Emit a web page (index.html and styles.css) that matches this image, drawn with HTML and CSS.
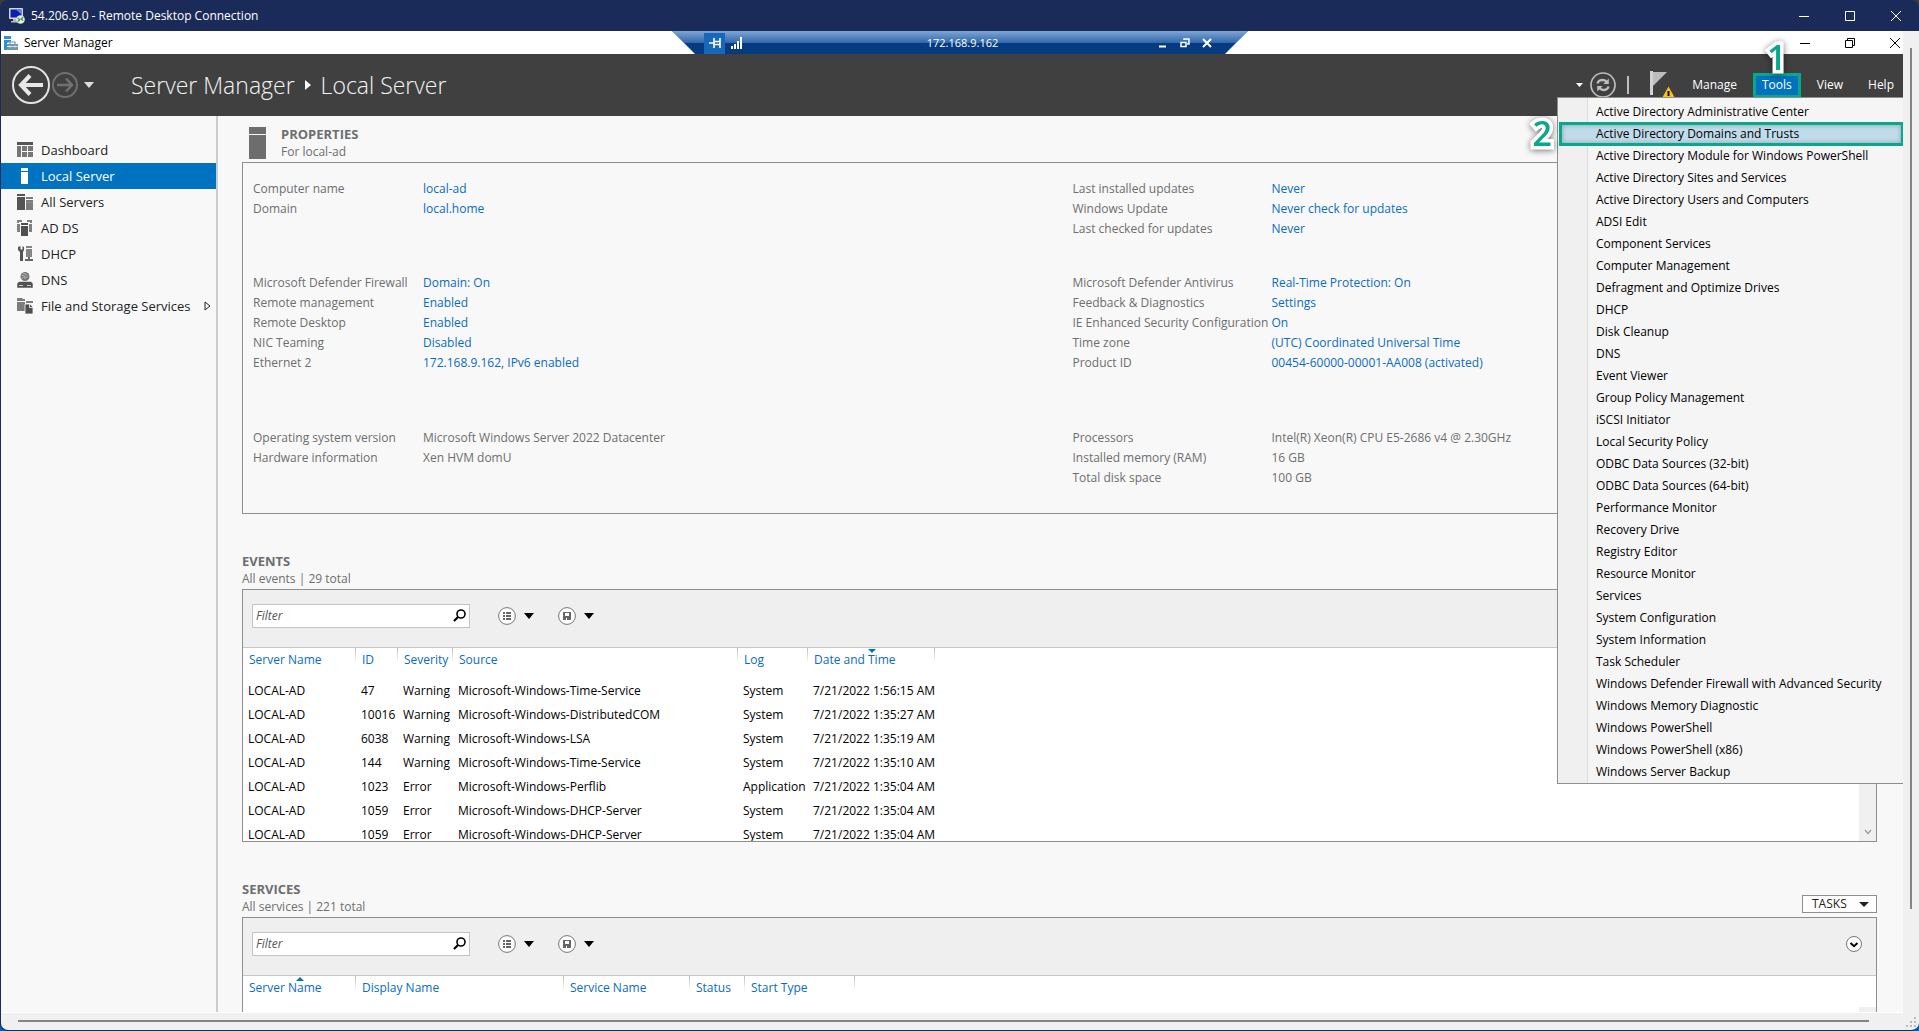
FILE: index.html
```html
<!DOCTYPE html>
<html lang="en">
<head>
<meta charset="utf-8">
<title>54.206.9.0 - Remote Desktop Connection</title>
<link rel="stylesheet" href="styles.css">
</head>
<body>
<div class="window">
  <header class="titlebar">
    <svg class="titlebar-icon" width="16" height="16" viewBox="0 0 16 16"><rect x="0" y="0" width="14" height="11" rx="1" fill="#d9d9d2"/><rect x="1.500" y="1.500" width="11" height="8" fill="#0a1fb8"/><path d="M7 1.500h5.500v5z" fill="#5e86ee"/><path d="M4 11h5v2h2v1.500H2V13h2z" fill="#b9b9b0"/><circle cx="11.500" cy="11.500" r="4.300" fill="#e8ebe4"/><path d="M8.700 10l2 1.800-2 1.800M14.200 9.200l-2 1.700 2 1.700" stroke="#2a9a2a" stroke-width="1.200" fill="none"/></svg>
    <span class="titlebar-text">54.206.9.0 - Remote Desktop Connection</span>
    <div class="window-buttons">
      <button type="button" aria-label="Minimize"><svg width="10" height="10"><path d="M0 5.500h10" stroke="#fff"/></svg></button>
      <button type="button" aria-label="Maximize"><svg width="10" height="10"><path d="M.5.500h9v9h-9z" stroke="#fff" fill="none"/></svg></button>
      <button type="button" aria-label="Close"><svg width="10" height="10"><path d="M0 0l10 10M10 0L0 10" stroke="#fff"/></svg></button>
    </div>
  </header>

  <div class="client">
    <div class="session">
      <div class="app-title">
        <svg width="14" height="14" viewBox="0 0 14 14"><path d="M0 0h7v3H0zM0 4h7v1.500L3 7v7H0z" fill="#2d8fd5"/><path d="M3 8h11v6H3z" fill="#6f97ad"/><path d="M6 8V6h5v2" stroke="#6f97ad" stroke-width="1.200" fill="none"/><path d="M3 10.500h11M6 9.500v2M11 9.500v2" stroke="#e6f0f5" stroke-width=".8"/></svg>
        <span class="app-title-text">Server Manager</span>
        <div class="app-buttons">
          <button type="button" aria-label="Minimize"><svg width="10" height="10"><path d="M0 5.500h10" stroke="#000"/></svg></button>
          <button type="button" aria-label="Restore"><svg width="10" height="10"><path d="M.5 2.500h7v7h-7zM2.500 2.500v-2h7v7h-2" stroke="#000" fill="none"/></svg></button>
          <button type="button" aria-label="Close"><svg width="10" height="10"><path d="M0 0l10 10M10 0L0 10" stroke="#000"/></svg></button>
        </div>
      </div>

      <header class="banner">
        <button type="button" class="round" aria-label="Back"><svg width="38" height="38" viewBox="0 0 38 38"><circle cx="19" cy="19" r="18" fill="none" stroke="#e4e4e4" stroke-width="2"/><path d="M31 19H10M18 9.500L9 19l9 9.500" fill="none" stroke="#e8e8e8" stroke-width="4"/></svg></button>
        <button type="button" class="round" aria-label="Forward"><svg width="26" height="26" viewBox="0 0 26 26"><circle cx="13" cy="13" r="12" fill="none" stroke="#707070" stroke-width="2"/><path d="M5 13h14M14 6.500l6 6.500-6 6.500" fill="none" stroke="#707070" stroke-width="2.500"/></svg></button>
        <button type="button" class="history" aria-label="History"><svg width="10" height="6"><path d="M0 0h10L5 6z" fill="#ddd"/></svg></button>
        <h1 class="crumbs"><span>Server Manager</span><svg width="6" height="10"><path d="M0 0l6 5-6 5z" fill="#fff"/></svg><span>Local Server</span></h1>
        <nav class="commands">
          <button type="button" class="crumb-caret" aria-label="Recent"><svg width="7" height="4"><path d="M0 0h7L3.500 4z" fill="#fff"/></svg></button>
          <button type="button" class="round" aria-label="Refresh"><svg width="26" height="26" viewBox="0 0 26 26"><circle cx="13" cy="13" r="12" fill="none" stroke="#bdbdbd" stroke-width="1.700"/><path d="M7.500 11.500c.8-3.600 6-4.800 9-1.800M18.500 14.500c-.8 3.600-6 4.800-9 1.800" fill="none" stroke="#bdbdbd" stroke-width="2.300"/><path d="M18.800 6.500v5.500h-5.500zM7.200 19.500V14h5.500z" fill="#bdbdbd"/></svg></button>
          <span class="divider"></span>
          <button type="button" class="flag" aria-label="Notifications"><svg width="26" height="28" viewBox="0 0 26 28"><path d="M0 0h3v24H0z" fill="#d2d2d2"/><path d="M3 1h14L3 15z" fill="#bdbdbd"/><path d="M18.500 15.500l6.700 12H11.800z" fill="#fdc116"/><path d="M17.500 20h2v5h-2zM17.500 26h2v2h-2z" fill="#111"/></svg></button>
          <button type="button" class="command">Manage</button>
          <button type="button" class="command command-open" aria-expanded="true">Tools<span class="callout callout-one">1</span></button>
          <button type="button" class="command">View</button>
          <button type="button" class="command">Help</button>
        </nav>
        <ul class="menu">
          <li><button type="button">Active Directory Administrative Center</button></li>
          <li class="picked"><button type="button">Active Directory Domains and Trusts</button><span class="callout callout-two">2</span></li>
          <li><button type="button">Active Directory Module for Windows PowerShell</button></li>
          <li><button type="button">Active Directory Sites and Services</button></li>
          <li><button type="button">Active Directory Users and Computers</button></li>
          <li><button type="button">ADSI Edit</button></li>
          <li><button type="button">Component Services</button></li>
          <li><button type="button">Computer Management</button></li>
          <li><button type="button">Defragment and Optimize Drives</button></li>
          <li><button type="button">DHCP</button></li>
          <li><button type="button">Disk Cleanup</button></li>
          <li><button type="button">DNS</button></li>
          <li><button type="button">Event Viewer</button></li>
          <li><button type="button">Group Policy Management</button></li>
          <li><button type="button">iSCSI Initiator</button></li>
          <li><button type="button">Local Security Policy</button></li>
          <li><button type="button">ODBC Data Sources (32-bit)</button></li>
          <li><button type="button">ODBC Data Sources (64-bit)</button></li>
          <li><button type="button">Performance Monitor</button></li>
          <li><button type="button">Recovery Drive</button></li>
          <li><button type="button">Registry Editor</button></li>
          <li><button type="button">Resource Monitor</button></li>
          <li><button type="button">Services</button></li>
          <li><button type="button">System Configuration</button></li>
          <li><button type="button">System Information</button></li>
          <li><button type="button">Task Scheduler</button></li>
          <li><button type="button">Windows Defender Firewall with Advanced Security</button></li>
          <li><button type="button">Windows Memory Diagnostic</button></li>
          <li><button type="button">Windows PowerShell</button></li>
          <li><button type="button">Windows PowerShell (x86)</button></li>
          <li><button type="button">Windows Server Backup</button></li>
        </ul>
      </header>

      <div class="workspace">
        <nav class="sidebar">
          <a href="#dashboard"><svg width="16" height="16" viewBox="0 0 16 16"><path d="M0 0h16v3H0z" fill="#555"/><path d="M0 4h4v11H0zM5 4h5v5H5zM11 4h5v5h-5zM5 10h5v5H5zM11 10h5v5h-5z" fill="#777"/></svg><span>Dashboard</span></a>
          <a href="#local" class="current"><svg width="16" height="16" viewBox="0 0 16 16"><path d="M4 0h7v3H4zM4 4h7v12H4z" fill="#fff"/></svg><span>Local Server</span></a>
          <a href="#all"><svg width="16" height="16" viewBox="0 0 16 16"><path d="M0 0h8v2H0zM0 3h8v13H0z" fill="#555"/><path d="M9 3h7v2H9zM9 6h7v10H9z" fill="#7c7c7c"/><path d="M9 8.500h7" stroke="#999" stroke-width=".6"/></svg><span>All Servers</span></a>
          <a href="#adds"><svg width="16" height="16" viewBox="0 0 16 16"><path d="M0 0h5v2H2v1H0zM10 0h5v3h-2V2h-3zM0 4h3v8H0zM12 4h3v8h-3z" fill="#808080"/><path d="M4 3h7v2H4zM4 6h7v10H4z" fill="#505050"/></svg><span>AD DS</span></a>
          <a href="#dhcp"><svg width="16" height="16" viewBox="0 0 16 16"><path d="M1 1v3l2 2v9h3V6l1-2V1L5.500 0v3.500h-2V0z" fill="#555"/><path d="M9 0h6v2H9zM9 3h6v8H9z" fill="#858585"/><path d="M11 11h2v2h3v2H8v-2h3z" fill="#666"/></svg><span>DHCP</span></a>
          <a href="#dns"><svg width="16" height="16" viewBox="0 0 16 16"><circle cx="8" cy="4.500" r="4.500" fill="#777"/><path d="M4.500 3l3 1 .5 2.500 3-3M6 1l4 2M4.500 6.500l2-1" stroke="#bbb" fill="none"/><path d="M2 9.500h12l2 2V16H0v-4.500z" fill="#505050" stroke="#f8f8f8" stroke-width=".5"/><path d="M2 13.500h4M10 13.500h4" stroke="#ccc"/></svg><span>DNS</span></a>
          <a href="#files"><svg width="16" height="16" viewBox="0 0 16 16"><path d="M0 0h5l1 1h2v2H0zM0 4h8v9H0zM9 3h7v2H9z" fill="#7c7c7c"/><path d="M8 6h5l3 3v7H8z" fill="#505050" stroke="#f8f8f8" stroke-width=".8"/><path d="M12.500 6v3.500H16" stroke="#ddd" fill="none"/></svg><span>File and Storage Services</span><svg class="expand" width="7" height="10" viewBox="0 0 7 10"><path d="M1 1l5 4-5 4z" fill="none" stroke="#222"/></svg></a>
        </nav>

        <main class="main">
          <section>
            <div class="section-head">
              <svg width="17" height="32" viewBox="0 0 17 32"><path d="M0 0h17v7H0zM0 8h17v24H0z" fill="#6d6d6d"/></svg>
              <div><h2>PROPERTIES</h2><p>For local-ad</p></div>
            </div>
            <div class="panel properties">
              <dl class="facts">
                <dt>Computer name</dt><dd><a href="#p">local-ad</a></dd>
                <dt>Domain</dt><dd><a href="#p">local.home</a></dd>
              </dl>
              <dl class="facts facts-right">
                <dt>Last installed updates</dt><dd><a href="#p">Never</a></dd>
                <dt>Windows Update</dt><dd><a href="#p">Never check for updates</a></dd>
                <dt>Last checked for updates</dt><dd><a href="#p">Never</a></dd>
              </dl>
              <dl class="facts">
                <dt>Microsoft Defender Firewall</dt><dd><a href="#p">Domain: On</a></dd>
                <dt>Remote management</dt><dd><a href="#p">Enabled</a></dd>
                <dt>Remote Desktop</dt><dd><a href="#p">Enabled</a></dd>
                <dt>NIC Teaming</dt><dd><a href="#p">Disabled</a></dd>
                <dt>Ethernet 2</dt><dd><a href="#p">172.168.9.162, IPv6 enabled</a></dd>
              </dl>
              <dl class="facts facts-right">
                <dt>Microsoft Defender Antivirus</dt><dd><a href="#p">Real-Time Protection: On</a></dd>
                <dt>Feedback &amp; Diagnostics</dt><dd><a href="#p">Settings</a></dd>
                <dt>IE Enhanced Security Configuration</dt><dd><a href="#p">On</a></dd>
                <dt>Time zone</dt><dd><a href="#p">(UTC) Coordinated Universal Time</a></dd>
                <dt>Product ID</dt><dd><a href="#p">00454-60000-00001-AA008 (activated)</a></dd>
              </dl>
              <dl class="facts">
                <dt>Operating system version</dt><dd>Microsoft Windows Server 2022 Datacenter</dd>
                <dt>Hardware information</dt><dd>Xen HVM domU</dd>
              </dl>
              <dl class="facts facts-right">
                <dt>Processors</dt><dd>Intel(R) Xeon(R) CPU E5-2686 v4 @ 2.30GHz</dd>
                <dt>Installed memory (RAM)</dt><dd>16 GB</dd>
                <dt>Total disk space</dt><dd>100 GB</dd>
              </dl>
            </div>
          </section>

          <section>
            <div class="section-head plain">
              <div><h2>EVENTS</h2><p>All events | 29 total</p></div>
            </div>
            <div class="panel">
              <div class="toolbar">
                <label class="filter"><input type="text" placeholder="Filter" aria-label="Filter events"><svg width="13" height="13" viewBox="0 0 13 13"><circle cx="8" cy="5" r="4" fill="none" stroke="#000" stroke-width="1.600"/><path d="M5 8L1 12" stroke="#000" stroke-width="2.200"/></svg></label>
                <button type="button" class="tool" aria-label="Saved criteria"><svg width="18" height="18" viewBox="0 0 18 18"><circle cx="9" cy="9" r="8.400" fill="#fff" stroke="#777"/><path d="M5 5h2v2H5zM8 5h5v2H8zM5 8h2v2H5zM8 8h5v2H8zM5 11h2v2H5zM8 11h5v2H8z" fill="#666"/></svg><svg width="10" height="6"><path d="M0 0h10L5 6z"/></svg></button>
                <button type="button" class="tool" aria-label="Save criteria"><svg width="18" height="18" viewBox="0 0 18 18"><circle cx="9" cy="9" r="8.400" fill="#fff" stroke="#777"/><path d="M5 5h8v8H5z" fill="#666"/><path d="M7 6h4v3H7zM8 11h1v2H8z" fill="#fff"/></svg><svg width="10" height="6"><path d="M0 0h10L5 6z"/></svg></button>
              </div>
              <div class="grid events-grid">
                <table>
                  <colgroup><col class="c-server"><col class="c-id"><col class="c-severity"><col class="c-source"><col class="c-log"><col class="c-date"></colgroup>
                  <thead><tr><th>Server Name</th><th>ID</th><th>Severity</th><th>Source</th><th>Log</th><th class="sort-down">Date and Time</th></tr></thead>
                  <tbody>
                    <tr><td>LOCAL-AD</td><td>47</td><td>Warning</td><td>Microsoft-Windows-Time-Service</td><td>System</td><td>7/21/2022 1:56:15 AM</td></tr>
                    <tr><td>LOCAL-AD</td><td>10016</td><td>Warning</td><td>Microsoft-Windows-DistributedCOM</td><td>System</td><td>7/21/2022 1:35:27 AM</td></tr>
                    <tr><td>LOCAL-AD</td><td>6038</td><td>Warning</td><td>Microsoft-Windows-LSA</td><td>System</td><td>7/21/2022 1:35:19 AM</td></tr>
                    <tr><td>LOCAL-AD</td><td>144</td><td>Warning</td><td>Microsoft-Windows-Time-Service</td><td>System</td><td>7/21/2022 1:35:10 AM</td></tr>
                    <tr><td>LOCAL-AD</td><td>1023</td><td>Error</td><td>Microsoft-Windows-Perflib</td><td>Application</td><td>7/21/2022 1:35:04 AM</td></tr>
                    <tr><td>LOCAL-AD</td><td>1059</td><td>Error</td><td>Microsoft-Windows-DHCP-Server</td><td>System</td><td>7/21/2022 1:35:04 AM</td></tr>
                    <tr><td>LOCAL-AD</td><td>1059</td><td>Error</td><td>Microsoft-Windows-DHCP-Server</td><td>System</td><td>7/21/2022 1:35:04 AM</td></tr>
                  </tbody>
                </table>
                <div class="grid-scroll"><svg width="8" height="6" viewBox="0 0 8 6"><path d="M1 1l3 3.500L7 1" fill="none" stroke="#999" stroke-width="1.300"/></svg></div>
              </div>
            </div>
          </section>

          <section>
            <div class="section-head plain">
              <div><h2>SERVICES</h2><p>All services | 221 total</p></div>
              <button type="button" class="tasks">TASKS<svg width="10" height="5"><path d="M0 0h10L5 5z" fill="#222"/></svg></button>
            </div>
            <div class="panel">
              <div class="toolbar">
                <label class="filter"><input type="text" placeholder="Filter" aria-label="Filter services"><svg width="13" height="13" viewBox="0 0 13 13"><circle cx="8" cy="5" r="4" fill="none" stroke="#000" stroke-width="1.600"/><path d="M5 8L1 12" stroke="#000" stroke-width="2.200"/></svg></label>
                <button type="button" class="tool" aria-label="Saved criteria"><svg width="18" height="18" viewBox="0 0 18 18"><circle cx="9" cy="9" r="8.400" fill="#fff" stroke="#777"/><path d="M5 5h2v2H5zM8 5h5v2H8zM5 8h2v2H5zM8 8h5v2H8zM5 11h2v2H5zM8 11h5v2H8z" fill="#666"/></svg><svg width="10" height="6"><path d="M0 0h10L5 6z"/></svg></button>
                <button type="button" class="tool" aria-label="Save criteria"><svg width="18" height="18" viewBox="0 0 18 18"><circle cx="9" cy="9" r="8.400" fill="#fff" stroke="#777"/><path d="M5 5h8v8H5z" fill="#666"/><path d="M7 6h4v3H7zM8 11h1v2H8z" fill="#fff"/></svg><svg width="10" height="6"><path d="M0 0h10L5 6z"/></svg></button>
                <button type="button" class="expander" aria-label="Show query options"><svg width="16" height="16" viewBox="0 0 16 16"><circle cx="8" cy="8" r="7.500" fill="#fff" stroke="#777"/><path d="M4.500 7L8 10.200 11.500 7" fill="none" stroke="#000" stroke-width="2"/></svg></button>
              </div>
              <div class="grid">
                <table class="services">
                  <colgroup><col class="c-server"><col class="c-display"><col class="c-service"><col class="c-status"><col class="c-start"></colgroup>
                  <thead><tr><th class="sort-up">Server Name</th><th>Display Name</th><th>Service Name</th><th>Status</th><th>Start Type</th></tr></thead>
                </table>
                <div class="grid-scroll"></div>
              </div>
            </div>
          </section>
        </main>
      </div>
    </div>
    <div class="track-v"><span></span></div>
    <div class="track-h"><span></span></div>
    <svg class="grip" width="11" height="11" viewBox="0 0 11 11"><path d="M8 0h2v2H8zM4 4h2v2H4zM8 4h2v2H8zM0 8h2v2H0zM4 8h2v2H4zM8 8h2v2H8z" fill="#bbb"/></svg>

    <div class="connection">
      <svg class="connection-shape" viewBox="0 0 576 27"><defs><linearGradient id="bar" x1="0" y1="0" x2="0" y2="1"><stop offset="0" stop-color="#7ea6d8"/><stop offset=".46" stop-color="#2f66a6"/><stop offset=".46" stop-color="#073b81"/><stop offset="1" stop-color="#073b81"/></linearGradient></defs><path d="M0 0h576l-26 26.500H26z" fill="url(#bar)"/><path d="M0 0l26 26h524L576 0" fill="none" stroke="#8aaad0"/></svg>
      <button type="button" class="pin" aria-label="Pin the connection bar"><svg width="12" height="10" viewBox="0 0 12 10"><path d="M0 5h5M5 0v10M5.500 3.500h5M5.500 6.500h5M11 0v10" stroke="#fff" stroke-width="1.600"/></svg></button>
      <svg width="12" height="12" viewBox="0 0 12 12"><path d="M0 9h2v3H0zM3 7h2v5H3zM6 4h2v8H6zM9 0h2v12H9z" fill="#fff"/></svg>
      <span class="connection-name">172.168.9.162</span>
      <button type="button" aria-label="Minimize"><svg width="10" height="10"><path d="M1 8.500h7" stroke="#fff" stroke-width="2"/></svg></button>
      <button type="button" aria-label="Restore"><svg width="10" height="10"><path d="M1 4.500h5v4H1zM4 2V1h5v5H7" stroke="#fff" stroke-width="1.500" fill="none"/></svg></button>
      <button type="button" aria-label="Close"><svg width="10" height="10"><path d="M1 1l8 8M9 1L1 9" stroke="#fff" stroke-width="2"/></svg></button>
    </div>
  </div>
</div>
</body>
</html>
```
FILE: styles.css
```css
* { box-sizing: border-box; }

:root {
  --navy: #1b2b59;
  --blue: #0072c0;
  --link: #0a6cc0;
  --green: #07a98a;
  --ink: #6e6e6e;
  --line: #8e8e8e;
}

body {
  margin: 0;
  background: linear-gradient(#3c3c3c 50%, #0b5ba8 50%);
  font: 12px/16px "Open Sans", "Noto Sans", sans-serif;
  color: #000;
}

button {
  margin: 0;
  padding: 0;
  border: 0;
  background: none;
  font: inherit;
  color: inherit;
  display: flex;
  align-items: center;
}

svg { display: block; flex: none; }
h1, h2, p, dl, dd, ul { margin: 0; padding: 0; }
a { color: var(--link); text-decoration: none; }

.window {
  display: flex;
  flex-direction: column;
  height: 100vh;
  border: solid var(--navy);
  border-width: 0 0 1px 1px;
  border-radius: 8px;
  background: var(--navy);
  overflow: hidden;
}

/* Outer window title */
.titlebar {
  display: flex;
  align-items: center;
  height: 31px;
  flex: none;
  padding-left: 8px;
  gap: 6px;
  color: #fff;
}

.window-buttons { display: flex; margin-left: auto; }
.window-buttons button { width: 46px; height: 31px; justify-content: center; }

.client {
  position: relative;
  flex: 1;
  min-height: 0;
  display: grid;
  grid-template: minmax(0, 1fr) 17px / minmax(0, 1fr) 16px;
  background: #f0f0f0;
}

.session {
  display: flex;
  flex-direction: column;
  overflow: hidden;
  border-bottom: 1px solid #fff;
  background: #f8f8f8;
}

.track-v { padding: 17px 5px 104px 7px; display: flex; }
.track-v span { width: 2px; background: #858585; }
.track-h { padding: 7px 34px 0 17px; }
.track-h span { display: block; height: 2px; background: #858585; }
.grip { align-self: end; justify-self: end; margin: 2px; }

/* Connection bar laid over the session */
.connection {
  position: absolute;
  top: 0;
  left: 50%;
  transform: translateX(-50%);
  width: 576px;
  height: 24px;
  padding: 0 36px 0 32px;
  display: flex;
  align-items: center;
  gap: 12px;
  color: #fff;
}
.connection > * { position: relative; }
.connection > .connection-shape { position: absolute; inset: 0; width: 576px; height: 27px; }
.connection .pin { width: 21px; height: 21px; margin-right: -6px; justify-content: center; background: #1767bb; }
.connection-name { flex: 1; padding-left: 24px; text-align: center; font-size: 11px; }

/* Server Manager title */
.app-title {
  display: flex;
  align-items: center;
  flex: none;
  height: 23px;
  padding: 0 3px;
  gap: 6px;
  background: #fff;
}
.app-buttons { display: flex; gap: 35px; margin-left: auto; }

.banner {
  position: relative;
  z-index: 1;
  display: flex;
  align-items: center;
  flex: none;
  height: 62px;
  padding-left: 11px;
  background: #404040;
  color: #fff;
}
.history { margin-left: 6px; }
.banner .round + .round { margin-left: 2px; }
.crumbs {
  display: flex;
  align-items: center;
  gap: 10px;
  margin-left: 37px;
  font-size: 23px;
  line-height: 32px;
  font-weight: 300;
  color: #f4f4f4;
}
.commands { display: flex; align-items: center; margin-left: auto; gap: 7px; }
.divider { width: 2px; height: 18px; margin: 0 14px 0 4px; background: #bdbdbd; }
.flag { width: 26px; height: 28px; }
.command { position: relative; height: 25px; padding: 0 9px; }
.command-open { background: var(--blue); outline: 3px solid var(--green); outline-offset: -3px; }

.callout {
  position: absolute;
  font-size: 34px;
  line-height: 34px;
  font-weight: 600;
  color: var(--green);
  -webkit-text-stroke: 7px #fff;
  paint-order: stroke fill;
  filter: drop-shadow(0 1px 3px #0008);
}
.callout-one { left: 14px; bottom: 24px; }
.callout-two { right: 100%; top: -7px; margin-right: 8px; }

.menu {
  position: absolute;
  top: 43px;
  right: 0;
  width: 346px;
  padding: 3px 0 0 2px;
  list-style: none;
  border: solid var(--line);
  border-width: 1px 0 1px 1px;
  background: linear-gradient(90deg, #f0f0f0 29px, #dcdcdc 29px 30px, #f5f5f5 30px);
  color: #000;
}
.menu li { position: relative; }
.menu button { width: 100%; height: 22px; padding-left: 36px; }
.menu .picked button { background: #c0dcea; outline: 3px solid var(--green); outline-offset: -2px; box-shadow: inset 0 0 5px 2px #0004; }

.workspace { display: flex; flex: 1; min-height: 0; }

.sidebar {
  flex: none;
  width: 217px;
  padding-top: 21px;
  border-right: 2px solid #ccc;
}
.sidebar a {
  display: flex;
  align-items: center;
  gap: 8px;
  height: 26px;
  padding: 0 5px 0 16px;
  font-size: 13px;
  white-space: nowrap;
  color: #222;
}
.sidebar .current { background: var(--blue); color: #fff; }
.expand { margin-left: auto; }

.main { flex: 1; min-width: 0; padding: 8px 26px 0 24px; color: var(--ink); }
.main section { margin-bottom: 37px; }

.section-head { display: flex; align-items: center; height: 38px; gap: 15px; padding-left: 7px; }
.section-head.plain { padding-left: 0; }
h2 { font-size: 13px; line-height: 18px; font-weight: 700; }
.section-head p { line-height: 18px; }

.tasks {
  align-self: end;
  margin: 0 0 4px auto;
  width: 75px;
  height: 18px;
  padding: 0 7px 0 9px;
  justify-content: space-between;
  border: 1px solid var(--line);
  background: #fff;
  color: #222;
}

.panel { border: 1px solid var(--line); }
.properties {
  display: grid;
  grid-template-columns: 820fr 804fr;
  grid-template-rows: 94px 155px auto;
  padding: 16px 0 25px 10px;
}
.facts { display: grid; grid-template-columns: 170px 1fr; grid-auto-rows: 20px; align-content: start; line-height: 20px; }
.facts-right { grid-template-columns: 199px 1fr; }
.facts dt { white-space: nowrap; }

.toolbar {
  display: flex;
  align-items: center;
  height: 58px;
  padding: 0 14px 6px 9px;
  border-bottom: 1px solid #c8c8c8;
  background: #efefef;
}
.filter {
  display: flex;
  align-items: center;
  width: 218px;
  height: 24px;
  margin-right: 19px;
  padding: 0 3px;
  border: 1px solid #c3c3c3;
  background: #fff;
}
.filter input { flex: 1; min-width: 0; padding: 0; border: 0; outline: 0; font: inherit; font-style: italic; }
.filter input::placeholder { color: #555; }
.tool { gap: 8px; margin-left: 9px; margin-right: 15px; }
.expander { margin-left: auto; }

.grid { display: flex; justify-content: space-between; align-items: stretch; background: #fff; color: #000; }
.events-grid { height: 193px; overflow: hidden; }
.grid-scroll {
  width: 17px;
  margin-top: 31px;
  display: flex;
  align-items: flex-end;
  justify-content: center;
  padding-bottom: 6px;
  background: #f0f0f0;
}

table { table-layout: fixed; width: 692px; align-self: flex-start; border-collapse: collapse; }
.services { width: 612px; }
th, td { padding: 0 0 0 5px; text-align: left; white-space: nowrap; font-weight: 400; }
th {
  position: relative;
  height: 31px;
  padding: 0 0 7px 6px;
  color: var(--link);
  background: linear-gradient(#bbb, #fff) right top / 1px 15px no-repeat;
}
td { height: 24px; }
.sort-down::after, .sort-up::after {
  content: "";
  position: absolute;
  top: 1px;
  left: 50%;
  margin-left: -4px;
  border: 4px solid transparent;
  border-top-color: var(--blue);
  border-bottom: 0;
}
.sort-up::after { border: 4px solid transparent; border-bottom-color: var(--blue); border-top: 0; }

.c-server { width: 113px; }
.c-id { width: 42px; }
.c-severity, .c-status { width: 55px; }
.c-source { width: 285px; }
.c-log { width: 70px; }
.c-date { width: 127px; }
.c-display { width: 208px; }
.c-service { width: 126px; }
.c-start { width: 110px; }
```
